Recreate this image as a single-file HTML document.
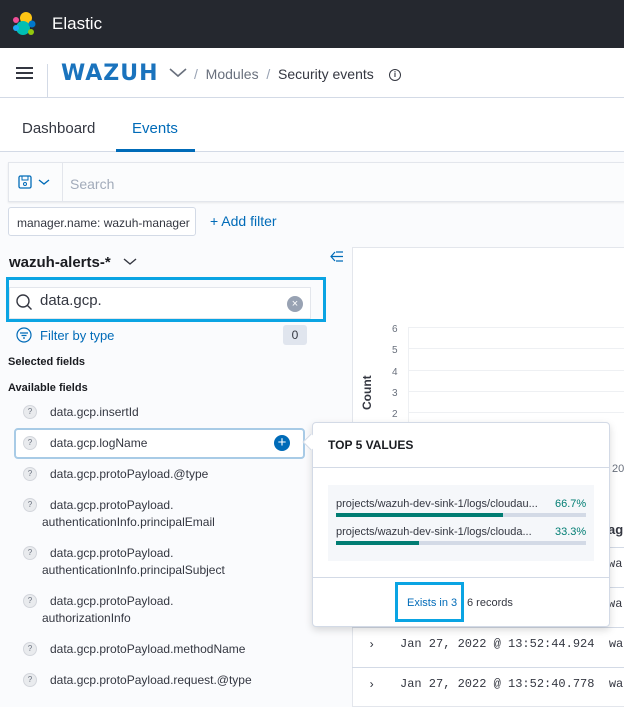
<!DOCTYPE html><html><head><style>
*{box-sizing:border-box;margin:0;padding:0}
body{width:624px;height:693px;overflow:hidden;font-family:"Liberation Sans",sans-serif;background:#fafbfd;position:relative;color:#343741}
.a{position:absolute;white-space:nowrap}
.fi{position:absolute;left:50px;font-size:12px;color:#343741;line-height:17px;white-space:nowrap}
.ic{position:absolute;left:23px;width:14px;height:14px;border-radius:50%;background:#e9ebee;border:1px solid #d3d6dc;font-size:8px;text-align:center;line-height:12px;color:#69707d}
.mono{font-family:"Liberation Mono",monospace;font-size:12px;color:#343741}
</style></head><body>
<div class="a" style="left:0;top:0;width:624px;height:48px;background:#25282f"></div>
<svg class="a" style="left:11px;top:11px" width="26" height="26" viewBox="0 0 26 26"><circle cx="15" cy="7" r="6" fill="#fec514"/><circle cx="12" cy="17" r="7" fill="#00bfb3"/><circle cx="5" cy="9" r="3" fill="#f04e98"/><circle cx="5" cy="17" r="3" fill="#1ba9f5"/><circle cx="21" cy="13" r="3.5" fill="#0077cc"/><circle cx="20" cy="21" r="3" fill="#93c90e"/></svg>
<div class="a" style="left:52px;top:14px;font-size:17px;color:#fff">Elastic</div>
<div class="a" style="left:0;top:48px;width:624px;height:50px;background:#fff;border-bottom:1px solid #d3dae6"></div>
<div class="a" style="left:16px;top:67px;width:17px;height:2px;background:#343741;box-shadow:0 5px 0 #343741,0 10px 0 #343741"></div>
<div class="a" style="left:47px;top:64px;width:1px;height:34px;background:#d3dae6"></div>
<div class="a" style="left:61px;top:61px;font-size:22px;font-weight:bold;color:#1a73bd;letter-spacing:1px;font-family:'DejaVu Sans',sans-serif">WAZUH</div>
<svg class="a" style="left:169px;top:68px" width="18" height="10"><path d="M1 1l8 7 8-7" stroke="#69707d" stroke-width="1.6" fill="none"/></svg>
<div class="a" style="left:194px;top:66px;font-size:14px;color:#98a2b3">/ &nbsp;<span style="color:#69707d">Modules</span> &nbsp;/&nbsp; <span style="color:#343741">Security events</span></div>
<div class="a" style="left:389px;top:69px;width:12px;height:12px;border:1.3px solid #343741;border-radius:50%;font-size:8px;text-align:center;line-height:10px;font-weight:bold">i</div>
<div class="a" style="left:0;top:98px;width:624px;height:54px;background:#fff;border-bottom:1px solid #d3dae6"></div>
<div class="a" style="left:22px;top:120px;font-size:15px;color:#343741">Dashboard</div>
<div class="a" style="left:132px;top:120px;font-size:15px;color:#006bb8">Events</div>
<div class="a" style="left:116px;top:149px;width:79px;height:3px;background:#006bb8"></div>
<div class="a" style="left:8px;top:162px;width:620px;height:40px;background:#fbfcfd;border:1px solid #e3e6ec;box-shadow:0 1px 2px rgba(0,0,0,.08)"></div>
<div class="a" style="left:62px;top:163px;width:1px;height:38px;background:#e3e6ec"></div>
<svg class="a" style="left:18px;top:175px" width="36" height="14"><rect x="1" y="1" width="12" height="12" rx="1.5" stroke="#006bb8" fill="none" stroke-width="1.3"/><rect x="4" y="1" width="6" height="4" stroke="#006bb8" fill="none"/><circle cx="7" cy="9" r="1.5" stroke="#006bb8" fill="none"/><path d="M21 5l5 4 5-4" stroke="#006bb8" fill="none" stroke-width="1.4"/></svg>
<div class="a" style="left:70px;top:176px;font-size:14px;color:#a2abba">Search</div>
<div class="a" style="left:8px;top:207px;width:188px;height:29px;background:#fff;border:1px solid #d3dae6;border-radius:3px;font-size:12px;padding:8px 0 0 8px;color:#343741">manager.name: wazuh-manager</div>
<div class="a" style="left:210px;top:213px;font-size:14px;color:#006bb8">+ Add filter</div>
<div class="a" style="left:9px;top:254px;font-size:15px;font-weight:bold;color:#1a1c21">wazuh-alerts-*</div>
<svg class="a" style="left:123px;top:258px" width="14" height="8"><path d="M1 1l6 5 6-5" stroke="#343741" fill="none" stroke-width="1.4"/></svg>
<svg class="a" style="left:330px;top:251px" width="14" height="11"><path d="M5 1L1 5.5 5 10M1 5.5h12M6 1h7M6 10h7" stroke="#006bb8" fill="none" stroke-width="1.2"/></svg>
<div class="a" style="left:6px;top:277px;width:320px;height:45px;border:3px solid #0aa4e3"></div>
<div class="a" style="left:9px;top:287px;width:302px;height:32px;background:#fff;border:1px solid #e3e6ec"></div>
<svg class="a" style="left:15px;top:293px" width="18" height="18"><circle cx="8" cy="8" r="6" stroke="#343741" fill="none" stroke-width="1.4"/><path d="M12.5 12.5l4 4" stroke="#343741" stroke-width="1.4"/></svg>
<div class="a" style="left:40px;top:292px;font-size:15px;color:#343741">data.gcp.</div>
<div class="a" style="left:287px;top:296px;width:16px;height:16px;border-radius:50%;background:#98a2b3;color:#fff;font-size:11px;text-align:center;line-height:16px">×</div>
<svg class="a" style="left:16px;top:327px" width="16" height="16"><circle cx="8" cy="8" r="7" stroke="#006bb8" fill="none" stroke-width="1.2"/><path d="M4 6h8M5.5 8.5h5M7 11h2" stroke="#006bb8" stroke-width="1.2"/></svg>
<div class="a" style="left:40px;top:328px;font-size:13px;color:#006bb8">Filter by type</div>
<div class="a" style="left:283px;top:325px;width:24px;height:20px;background:#e0e5ee;border-radius:3px;font-size:12px;text-align:center;line-height:20px">0</div>
<div class="a" style="left:8px;top:356px;font-size:11px;font-weight:bold;color:#1a1c21">Selected fields</div>
<div class="a" style="left:8px;top:382px;font-size:11px;font-weight:bold;color:#1a1c21">Available fields</div>
<div class="a" style="left:14px;top:428px;width:291px;height:31px;background:#fff;border:2px solid #a8cbe6;border-radius:4px"></div>
<div class="ic" style="top:405px">?</div><div class="fi" style="top:404px">data.gcp.insertId</div>
<div class="ic" style="top:436px">?</div><div class="fi" style="top:435px">data.gcp.logName</div>
<div class="a" style="left:274px;top:435px;width:16px;height:16px;border-radius:50%;background:#006bb8;color:#fff;font-size:15px;text-align:center;line-height:15px">+</div>
<div class="ic" style="top:467px">?</div><div class="fi" style="top:466px">data.gcp.protoPayload.@type</div>
<div class="ic" style="top:498px">?</div><div class="fi" style="top:497px">data.gcp.protoPayload.<br><span style="margin-left:-8px">authenticationInfo.principalEmail</span></div>
<div class="ic" style="top:546px">?</div><div class="fi" style="top:545px">data.gcp.protoPayload.<br><span style="margin-left:-8px">authenticationInfo.principalSubject</span></div>
<div class="ic" style="top:594px">?</div><div class="fi" style="top:593px">data.gcp.protoPayload.<br><span style="margin-left:-8px">authorizationInfo</span></div>
<div class="ic" style="top:642px">?</div><div class="fi" style="top:641px">data.gcp.protoPayload.methodName</div>
<div class="ic" style="top:673px">?</div><div class="fi" style="top:672px">data.gcp.protoPayload.request.@type</div>
<div class="a" style="left:352px;top:247px;width:280px;height:460px;background:#fff;border:1px solid #e3e6ec"></div>
<div class="a" style="left:360px;top:410px;font-size:12px;font-weight:bold;transform:rotate(-90deg);transform-origin:left top;color:#343741">Count</div>
<div class="a" style="left:392px;top:319px;font-size:10px;color:#69707d;line-height:21.3px">6<br>5<br>4<br>3<br>2</div>
<div class="a" style="left:408px;top:327px;width:220px;height:1px;background:#eef0f3;box-shadow:0 21px 0 #eef0f3,0 43px 0 #eef0f3,0 64px 0 #eef0f3,0 85px 0 #eef0f3"></div>
<div class="a" style="left:408px;top:327px;width:1px;height:100px;background:#eef0f3"></div>
<div class="a" style="left:612px;top:463px;font-size:11px;color:#69707d">20</div>
<div class="a" style="left:608px;top:522px;font-size:13px;font-weight:bold">ag</div>
<div class="a" style="left:352px;top:547px;width:272px;height:1px;background:#d3dae6;box-shadow:0 40px 0 #d3dae6,0 80px 0 #d3dae6,0 120px 0 #d3dae6"></div>
<div class="a mono" style="left:608px;top:557px">wa</div>
<div class="a mono" style="left:608px;top:597px">wa</div>
<div class="a mono" style="left:368px;top:638px">›</div>
<div class="a mono" style="left:400px;top:637px">Jan 27, 2022 @ 13:52:44.924&nbsp;&nbsp;wa</div>
<div class="a mono" style="left:368px;top:678px">›</div>
<div class="a mono" style="left:400px;top:677px">Jan 27, 2022 @ 13:52:40.778&nbsp;&nbsp;wa</div>
<div class="a" style="left:312px;top:422px;width:298px;height:205px;background:#fff;border:1px solid #d3dae6;border-radius:4px;box-shadow:0 3px 8px rgba(0,0,0,.15)"></div>
<div class="a" style="left:305px;top:436px;width:12px;height:12px;background:#fff;border-left:1px solid #d3dae6;border-bottom:1px solid #d3dae6;transform:rotate(45deg)"></div>
<div class="a" style="left:328px;top:438px;font-size:12px;font-weight:bold;color:#1a1c21">TOP 5 VALUES</div>
<div class="a" style="left:313px;top:467px;width:296px;height:1px;background:#d3dae6"></div>
<div class="a" style="left:328px;top:485px;width:266px;height:76px;background:#f5f7fa"></div>
<div class="a" style="left:336px;top:498px;font-size:11px;color:#343741">projects/wazuh-dev-sink-1/logs/cloudau...</div>
<div class="a" style="left:555px;top:498px;font-size:11px;color:#017d73">66.7%</div>
<div class="a" style="left:336px;top:513px;width:250px;height:4px;background:#d3dae6"><div style="width:167px;height:4px;background:#017d73"></div></div>
<div class="a" style="left:336px;top:526px;font-size:11px;color:#343741">projects/wazuh-dev-sink-1/logs/clouda...</div>
<div class="a" style="left:555px;top:526px;font-size:11px;color:#017d73">33.3%</div>
<div class="a" style="left:336px;top:541px;width:250px;height:4px;background:#d3dae6"><div style="width:83px;height:4px;background:#017d73"></div></div>
<div class="a" style="left:313px;top:577px;width:296px;height:1px;background:#d3dae6"></div>
<div class="a" style="left:395px;top:582px;width:69px;height:40px;border:3px solid #0aa4e3"></div>
<div class="a" style="left:407px;top:597px;font-size:11px;color:#006bb8">Exists in 3</div>
<div class="a" style="left:467px;top:597px;font-size:11px;color:#343741">6 records</div>
</body></html>
